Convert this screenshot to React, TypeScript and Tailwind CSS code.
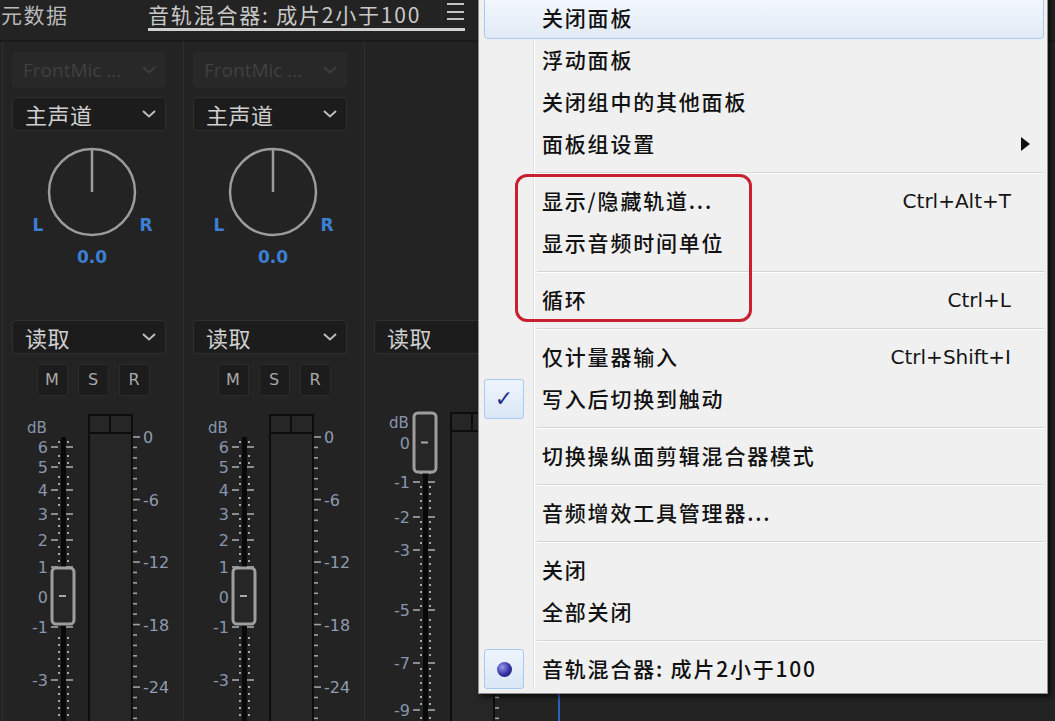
import React from 'react';

const CJK = "font-['Noto_Sans_CJK_SC',sans-serif]";
const DEJA = "font-['DejaVu_Sans',sans-serif]";

type Item = { label: string; shortcut?: string; arrow?: boolean; mark?: 'check' | 'radio'; hl?: boolean };

const MENU: (Item | 'sep')[] = [
  { label: '关闭面板', hl: true },
  { label: '浮动面板' },
  { label: '关闭组中的其他面板' },
  { label: '面板组设置', arrow: true },
  'sep',
  { label: '显示/隐藏轨道...', shortcut: 'Ctrl+Alt+T' },
  { label: '显示音频时间单位' },
  'sep',
  { label: '循环', shortcut: 'Ctrl+L' },
  'sep',
  { label: '仅计量器输入', shortcut: 'Ctrl+Shift+I' },
  { label: '写入后切换到触动', mark: 'check' },
  'sep',
  { label: '切换操纵面剪辑混合器模式' },
  'sep',
  { label: '音频增效工具管理器...' },
  'sep',
  { label: '关闭' },
  { label: '全部关闭' },
  'sep',
  { label: '音轨混合器: 成片2小于100', mark: 'radio' },
];

// left fader scale: [label, centre y] in page coordinates
const TRACK_SCALE: [string, number][] = [
  ['6', 447], ['5', 467], ['4', 490], ['3', 514], ['2', 540],
  ['1', 567], ['0', 597], ['-1', 627], ['-3', 680],
];
const MASTER_SCALE: [string, number][] = [
  ['0', 443], ['-1', 482], ['-2', 517], ['-3', 550], ['-5', 610], ['-7', 663], ['-9', 710],
];
const METER_LABELS = ['0', '-6', '-12', '-18', '-24'];

function Chevron({ color }: { color: string }) {
  return (
    <svg width="14" height="8" viewBox="0 0 14 8">
      <path d="M1 1 L7 6.5 L13 1" fill="none" stroke={color} strokeWidth="2" />
    </svg>
  );
}

function Dropdown({ label, dim }: { label: string; dim?: boolean }) {
  if (dim) {
    return (
      <div className="ml-[9px] flex h-[36px] w-[154px] items-center justify-between rounded-[3px] bg-[#282828] pl-[11px] pr-[10px]">
        <span className="font-['Open_Sans',sans-serif] text-[19px] text-[#404040]">FrontMic ...</span>
        <Chevron color="#3e3e3e" />
      </div>
    );
  }
  return (
    <div className="ml-[9px] flex h-[34px] w-[154px] items-center justify-between rounded-[4px] border border-[#2f2f2f] bg-[#1c1c1c] pl-[12px] pr-[9px]">
      <span className={`${CJK} text-[22px] leading-none tracking-[0.5px] text-[#cfcfcf]`}>{label}</span>
      <Chevron color="#bdbdbd" />
    </div>
  );
}

function Knob() {
  return (
    <svg width="180" height="135" viewBox="3 140 180 135" className="block">
      <circle cx="92" cy="192" r="43" fill="none" stroke="#9c9c9c" strokeWidth="2.5" />
      <line x1="92" y1="149" x2="92" y2="192" stroke="#9c9c9c" strokeWidth="2.5" />
      <g fill="#3c7fd3" fontFamily="DejaVu Sans" fontWeight="bold" textAnchor="middle">
        <text x="38" y="231" fontSize="17">L</text>
        <text x="146" y="231" fontSize="17">R</text>
        <text x="92" y="263" fontSize="17">0.0</text>
      </g>
    </svg>
  );
}

function Fader({ master = false }: { master?: boolean }) {
  const scale = master ? MASTER_SCALE : TRACK_SCALE;
  const handleY = master ? 413 : 568;
  const handleH = master ? 59 : 56;
  const meterTop = master ? 413 : 415;
  const dbY = master ? 428 : 433;
  const trackTop = master ? 440 : 437;
  const dots: number[] = [];
  for (let y = trackTop + 4; y < 721; y += 7) {
    if (scale.every(([, c]) => Math.abs(c - y) > 3)) dots.push(y);
  }
  const ticks: number[] = [];
  for (let i = 0; i < 28; i++) ticks.push(437 + i * 10.42);

  return (
    <svg width="180" height="311" viewBox="3 410 180 311" className="block">
      {/* meter */}
      <rect x="89" y={meterTop} width="43" height="330" fill="#262626" stroke="#0d0d0d" strokeWidth="2" />
      <line x1="89" y1={meterTop + 18} x2="132" y2={meterTop + 18} stroke="#0d0d0d" strokeWidth="2" />
      <line x1="110" y1={meterTop} x2="110" y2={meterTop + 18} stroke="#0d0d0d" strokeWidth="2" />
      {ticks.map((y, i) => (
        <line key={i} x1="133" y1={y} x2={i % 6 === 0 ? 140 : 137} y2={y} stroke="#9da2a8" strokeWidth="1.6" />
      ))}
      <g fill="#8e9bb0" fontFamily="DejaVu Sans" fontSize="16">
        {METER_LABELS.map((l, i) => (
          <text key={l} x="143" y={443 + i * 62.5}>{l}</text>
        ))}
      </g>

      {/* fader track */}
      <rect x="61" y={trackTop} width="5" height="330" fill="#090909" />
      {dots.map((y) => (
        <g key={y} fill="#a4a8ad">
          <rect x="58" y={y} width="2" height="2" />
          <rect x="67" y={y} width="2" height="2" />
        </g>
      ))}
      {scale.map(([l, c]) => (
        <g key={l}>
          <line x1="51" y1={c} x2="58" y2={c} stroke="#a4a8ad" strokeWidth="1.6" />
          <line x1="66" y1={c} x2="73" y2={c} stroke="#a4a8ad" strokeWidth="1.6" />
          <text x="48" y={c + 6} textAnchor="end" fill="#8796ad" fontFamily="DejaVu Sans" fontSize="16">{l}</text>
        </g>
      ))}
      <text x="27" y={dbY} fill="#8796ad" fontFamily="DejaVu Sans" fontSize="15">dB</text>

      {/* handle */}
      <rect x="52" y={handleY} width="22" height={handleH} rx="4" fill="#262626" stroke="#9e9e9e" strokeWidth="3" />
      <line x1="59" y1={handleY + handleH / 2} x2="66" y2={handleY + handleH / 2} stroke="#a8a8a8" strokeWidth="2" />
    </svg>
  );
}

function MSR() {
  return (
    <div className="mt-[10px] flex h-[32px] justify-center gap-[10px]">
      {['M', 'S', 'R'].map((k) => (
        <div key={k} className={`flex w-[31px] items-center justify-center rounded-[3px] border border-[#2c2c2c] bg-[#1c1c1c] ${DEJA} text-[16px] text-[#a9a9a9]`}>
          {k}
        </div>
      ))}
    </div>
  );
}

function Strip() {
  return (
    <div className="flex w-[181px] flex-col border-r border-[#2f2f2f]">
      <div className="mt-[10px]">
        <Dropdown label="" dim />
      </div>
      <div className="mt-[9px]">
        <Dropdown label="主声道" />
      </div>
      <div className="mt-[9px]">
        <Knob />
      </div>
      <div className="mt-[45px]">
        <Dropdown label="读取" />
      </div>
      <MSR />
      <div className="mt-[14px]">
        <Fader />
      </div>
    </div>
  );
}

function MasterStrip() {
  return (
    <div className="flex w-[181px] flex-col">
      <div className="mt-[278px]">
        <Dropdown label="读取" />
      </div>
      <div className="mt-[56px]">
        <Fader master />
      </div>
    </div>
  );
}

function MenuRow({ item }: { item: Item }) {
  return (
    <div
      className={
        item.hl
          ? 'flex h-[42px] items-center rounded-[4px] border border-[#a9c9ee] bg-gradient-to-b from-[#f4f8fd] to-[#e1eaf5]'
          : 'flex h-[42px] items-center'
      }
    >
      <div
        className={
          item.hl
            ? 'flex h-full w-[49px] items-center'
            : 'flex h-full w-[50px] items-center border-r border-[#e0e0e0] shadow-[1px_0_0_#ffffff]'
        }
      >
        {item.mark && (
          <div className="flex h-[40px] w-[40px] items-center justify-center rounded-[3px] border border-[#a8caf0] bg-gradient-to-b from-[#eef4fb] to-[#dbe7f6]">
            {item.mark === 'check' ? (
              <span className={`${DEJA} text-[22px] leading-none text-[#1f2c8f]`}>✓</span>
            ) : (
              <div className="h-[15px] w-[15px] rounded-full bg-[radial-gradient(circle_at_35%_35%,#9a9aee,#3030a0_55%,#1a1a66)]" />
            )}
          </div>
        )}
      </div>
      <span className={`flex-1 pl-[8px] ${CJK} text-[21px] font-medium tracking-[1.8px] text-[#111111]`}>{item.label}</span>
      {item.shortcut && (
        <span className={`pr-[33px] ${DEJA} text-[20px] text-[#151515]`}>{item.shortcut}</span>
      )}
      {item.arrow && (
        <svg width="9" height="14" viewBox="0 0 9 14" className="mr-[14px]">
          <path d="M0 0 L9 7 L0 14 Z" fill="#111111" />
        </svg>
      )}
    </div>
  );
}

function Menu() {
  return (
    <div className="absolute left-[478px] top-[-7px] w-[570px] border border-[#8f8f8f] bg-[#f0f0f0] py-[3px] pl-[5px] pr-[3px] shadow-[3px_3px_5px_rgba(0,0,0,0.6)]">
      {MENU.map((item, i) =>
        item === 'sep' ? (
          <div key={i} className="flex h-[15px] items-center">
            <div className="h-full w-[50px] border-r border-[#e0e0e0] shadow-[1px_0_0_#ffffff]" />
            <div className="ml-[3px] flex-1 border-t border-b border-t-[#d5d5d5] border-b-white" />
          </div>
        ) : (
          <MenuRow key={i} item={item} />
        ),
      )}
    </div>
  );
}

export default function App() {
  return (
    <div className="relative h-[721px] w-[1055px] overflow-hidden bg-[#232323]">
      {/* panel header */}
      <div className="flex h-[42px] border-b-2 border-[#1b1b1b]">
        <div className={`w-[148px] pl-[1px] ${CJK} text-[21px] leading-[28px] tracking-[1.5px] text-[#b9b9b9]`}>元数据</div>
        <div className="flex h-[31px] w-[317px] items-start justify-between border-b-[3px] border-[#d0d0d0]">
          <span className={`${CJK} text-[21px] leading-[28px] tracking-[1.8px] text-[#c8c8c8]`}>音轨混合器: 成片2小于100</span>
          <div className="flex h-[20px] w-[24px] flex-col justify-between border-l border-[#2c2c2c] pl-[5px] pt-[3px]">
            <div className="h-[2px] w-[17px] bg-[#c2c2c2]" />
            <div className="h-[2px] w-[17px] bg-[#c2c2c2]" />
            <div className="h-[2px] w-[17px] bg-[#c2c2c2]" />
          </div>
        </div>
      </div>

      {/* channel strips */}
      <div className="ml-[2px] flex h-[679px] border-l border-[#2f2f2f]">
        <Strip />
        <Strip />
        <MasterStrip />
        <div className="ml-[12px] w-[2px] bg-[#2c62b8]" />
      </div>

      <Menu />

      {/* red annotation */}
      <div className="absolute left-[515px] top-[174px] h-[148px] w-[237px] rounded-[12px] border-[3px] border-[#c8202f]" />
    </div>
  );
}
